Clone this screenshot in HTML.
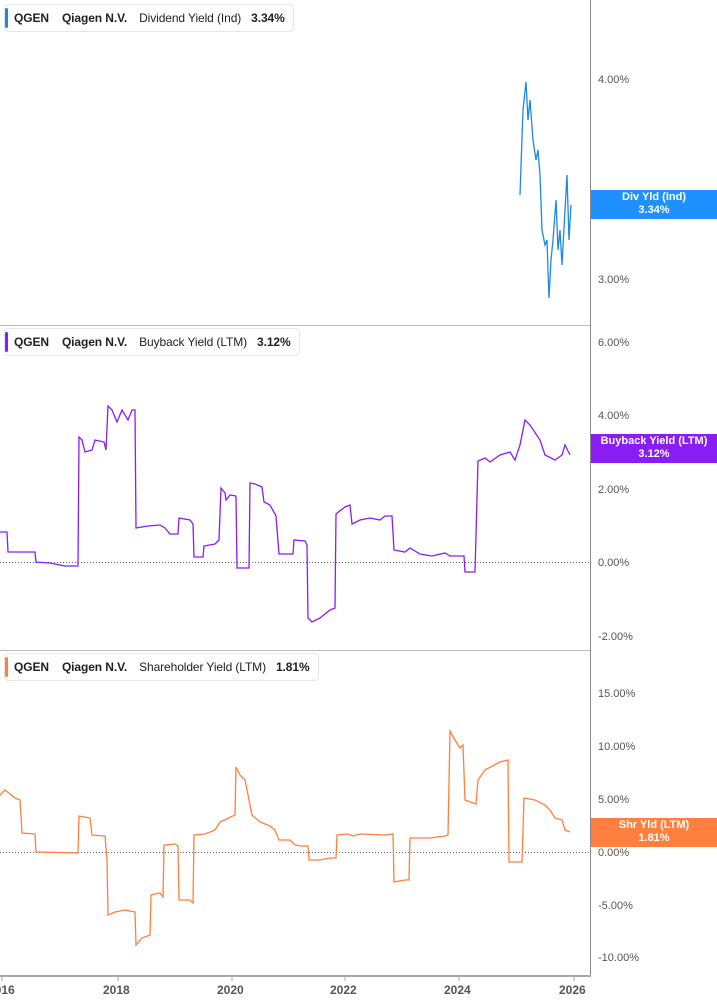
<!DOCTYPE html><html><head><style>
body{margin:0;width:717px;height:1005px;background:#fff;font-family:"Liberation Sans",sans-serif;overflow:hidden;position:relative}
.leg{position:absolute;left:4px;height:26px;border:1px solid #e6e6e6;border-radius:4px;background:#fff;font-size:12px;line-height:26px;color:#222;padding-left:9px;padding-right:8px;white-space:nowrap;letter-spacing:-0.1px}
.leg:before{content:"";position:absolute;left:0;top:3px;bottom:3px;width:3px;border-radius:2px;background:var(--c)}
.leg b{font-weight:bold;margin-right:13px}.leg span{margin-right:10px}
.tag{position:absolute;left:591px;width:126px;height:29px;color:#fff;font-size:11px;font-weight:bold;text-align:center;line-height:13px;padding-top:1px;box-sizing:border-box}
.ax{position:absolute;left:598px;font-size:11px;color:#555}
.yr{position:absolute;top:983px;font-size:12px;font-weight:bold;color:#555}
</style></head><body>
<svg width="717" height="1005" style="position:absolute;left:0;top:0">
<line x1="590.5" y1="0" x2="590.5" y2="977" stroke="#888"/>
<line x1="0" y1="325.5" x2="590" y2="325.5" stroke="#bbb"/>
<line x1="0" y1="650.5" x2="590" y2="650.5" stroke="#bbb"/>
<line x1="0" y1="976" x2="591" y2="976" stroke="#aaa" stroke-width="2"/>
<g stroke="#aaa"><line x1="2" y1="976" x2="2" y2="981"/><line x1="118" y1="976" x2="118" y2="981"/><line x1="232" y1="976" x2="232" y2="981"/><line x1="345" y1="976" x2="345" y2="981"/><line x1="459" y1="976" x2="459" y2="981"/><line x1="574" y1="976" x2="574" y2="981"/></g>
<line x1="0" y1="562.5" x2="590" y2="562.5" stroke="#666" stroke-dasharray="1,2"/>
<line x1="0" y1="852.5" x2="590" y2="852.5" stroke="#666" stroke-dasharray="1,2"/>
<polyline fill="none" stroke="#1e88e5" stroke-width="1.3" points="520,195 523,110 526,82 528,120 530,100 533,140 536,160 538,150 540,175 542,230 545,245 547,240 548,270 549,298 551,260 553,240 556,200 558,250 560,230 562,265 565,210 567,175 569,240 571,205"/>
<polyline fill="none" stroke="#8a1cf5" stroke-width="1.3" points="0,532 7,532 8,552 35,552 36,562 50,563 65,566 78,566 79,437 82,440 85,452 92,450 95,440 104,442 106,450 108,406 112,410 117,422 122,410 128,420 132,410 135,410 136,528 148,526 160,525 165,528 170,534 178,534 179,518 190,520 193,524 194,557 203,557 204,546 215,544 219,540 221,488 225,493 226,500 230,495 236,496 237,568 249,568 250,483 255,484 262,487 264,502 270,505 276,516 279,554 293,554 294,540 305,541 307,545 308,618 312,622 320,618 330,610 335,608 336,514 345,507 350,505 352,524 360,520 370,518 380,520 385,516 392,516 394,550 405,552 410,548 420,554 432,556 445,553 450,556 464,556 465,572 475,572 478,461 485,458 490,462 500,455 510,452 515,460 520,445 525,420 530,425 540,440 545,455 555,460 562,455 565,445 570,455"/>
<polyline fill="none" stroke="#ff7f3f" stroke-width="1.3" points="0,795 5,790 15,798 20,800 22,833 35,834 36,852 78,853 79,816 90,818 92,835 105,836 107,860 108,915 115,912 125,910 135,912 136,945 142,938 150,935 151,895 160,893 163,897 164,845 175,844 178,846 179,900 190,900 193,903 194,835 205,834 215,830 220,822 235,815 236,767 240,775 245,780 248,795 252,815 260,822 270,826 275,830 279,840 290,840 295,845 300,846 308,846 309,860 320,860 330,858 336,858 337,835 348,834 353,836 360,834 385,835 393,834 394,882 405,880 409,880 410,838 430,838 445,836 448,835 450,731 455,740 460,748 463,745 465,800 476,804 478,780 485,770 500,762 508,760 509,862 522,862 524,798 535,800 545,805 550,810 555,818 562,820 565,830 570,832"/>
</svg>
<div class="leg" style="top:4px;--c:#1e88e5"><b>QGEN</b><b style="margin-right:12px">Qiagen N.V.</b><span>Dividend Yield (Ind)</span><b style="margin:0">3.34%</b></div>
<div class="leg" style="top:328px;--c:#8a1cf5"><b>QGEN</b><b style="margin-right:12px">Qiagen N.V.</b><span>Buyback Yield (LTM)</span><b style="margin:0">3.12%</b></div>
<div class="leg" style="top:653px;--c:#ff7f3f"><b>QGEN</b><b style="margin-right:12px">Qiagen N.V.</b><span>Shareholder Yield (LTM)</span><b style="margin:0">1.81%</b></div>
<div class="ax" style="top:74px">4.00%</div><div class="ax" style="top:274px">3.00%</div>
<div class="ax" style="top:337px">6.00%</div><div class="ax" style="top:410px">4.00%</div><div class="ax" style="top:484px">2.00%</div><div class="ax" style="top:557px">0.00%</div><div class="ax" style="top:631px">-2.00%</div>
<div class="ax" style="top:688px">15.00%</div><div class="ax" style="top:741px">10.00%</div><div class="ax" style="top:794px">5.00%</div><div class="ax" style="top:847px">0.00%</div><div class="ax" style="top:900px">-5.00%</div><div class="ax" style="top:952px">-10.00%</div>
<div class="tag" style="top:190px;background:#1e90ff">Div Yld (Ind)<br>3.34%</div>
<div class="tag" style="top:434px;background:#8a1cf5">Buyback Yield (LTM)<br>3.12%</div>
<div class="tag" style="top:818px;background:#ff7f3f">Shr Yld (LTM)<br>1.81%</div>
<div class="yr" style="left:-12px">2016</div><div class="yr" style="left:103px">2018</div><div class="yr" style="left:217px">2020</div><div class="yr" style="left:330px">2022</div><div class="yr" style="left:444px">2024</div><div class="yr" style="left:559px">2026</div>
</body></html>
